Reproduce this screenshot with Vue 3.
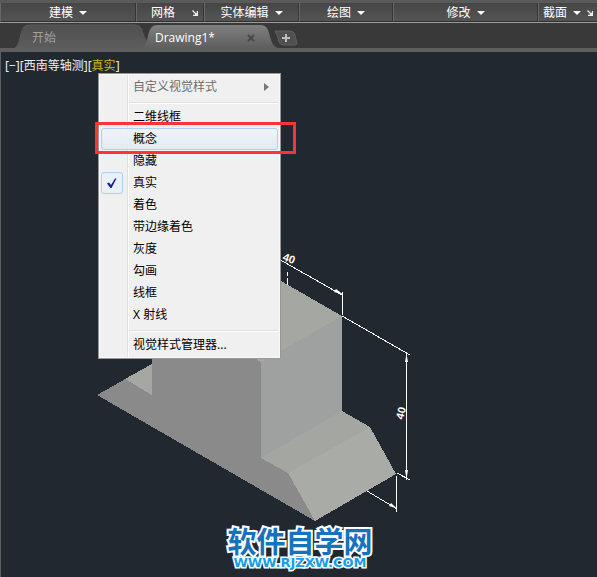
<script setup>
import { ref } from 'vue'

const panels = [
  { label: '建模', drop: true },
  { label: '网格', launcher: true },
  { label: '实体编辑', drop: true },
  { label: '绘图', drop: true },
  { label: '修改', drop: true },
  { label: '截面', drop: true, launcher: true }
]

const styles = ['二维线框', '概念', '隐藏', '真实', '着色', '带边缘着色', '灰度', '勾画', '线框', 'X 射线']
const current = ref('真实')
const hovered = ref('概念')
</script>

<template>
  <div class="app">
    <header class="ribbon">
      <div v-for="p in panels" :key="p.label" class="panel" :class="{ both: p.drop && p.launcher }">
        <button class="panel-title" type="button">
          {{ p.label }}
          <svg v-if="p.drop" width="8" height="4" viewBox="0 0 8 4"><path d="M0 0H8L4 4Z" fill="#fff" /></svg>
        </button>
        <button v-if="p.launcher" class="launcher" type="button" :aria-label="p.label">
          <svg width="6" height="6" viewBox="0 0 6 6">
            <path d="M0.5 0.5L4 4" stroke="#eee" stroke-width="1.3" />
            <path d="M5.4 1V5.4H1" fill="none" stroke="#eee" stroke-width="1.2" />
            <path d="M5.5 2V5.5H2Z" fill="#eee" />
          </svg>
        </button>
      </div>
    </header>

    <nav class="tabs">
      <button class="tab" type="button">
        <svg class="shape" viewBox="0 0 136 24" preserveAspectRatio="none">
          <defs>
            <linearGradient id="idle" x2="0" y2="1"><stop offset="0" stop-color="#505050" /><stop offset="1" stop-color="#5c5c5c" /></linearGradient>
          </defs>
          <path d="M0 24C6 22 5 9 9 4Q11 1 16 1H120Q126 1 128 6L136 24Z" fill="url(#idle)" />
          <path d="M9 4Q11 1 16 1H120Q126 1 128 6" fill="none" stroke="#5e5e5e" />
        </svg>
        <span>开始</span>
      </button>
      <button class="tab active" type="button">
        <svg class="shape" viewBox="0 0 136 24" preserveAspectRatio="none">
          <defs>
            <linearGradient id="live" x2="0" y2="1"><stop offset="0" stop-color="#808080" /><stop offset="1" stop-color="#5e5e5e" /></linearGradient>
          </defs>
          <path d="M0 24C6 22 5 9 9 4Q11 1 16 1H118Q124 1 126 6C129 14 129 22 136 24Z" fill="url(#live)" />
        </svg>
        <span>Drawing1*</span>
        <svg class="close" width="8" height="8" viewBox="0 0 8 8"><path d="M1 1L7 7M7 1L1 7" stroke="#464646" stroke-width="1.8" /></svg>
      </button>
      <button class="add" type="button" aria-label="+">
        <svg width="24" height="16" viewBox="0 0 24 16">
          <path d="M1 1H16Q20 1 21 5L23 14Q22 15 20 15H10Q6 15 5 12Q4 6 1 1Z" fill="#505050" stroke="#606060" />
          <path d="M12 4V12M8 8H16" stroke="#bcbcbc" stroke-width="2" />
        </svg>
      </button>
    </nav>

    <main class="canvas">
      <div class="viewlabel">[−][西南等轴测][<b>真实</b>]</div>

      <svg class="model" width="320" height="280" viewBox="96 246 320 280">
        <g shape-rendering="crispEdges">
          <path d="M97 395L152 364V316H261V458L288 473L315 521Z" fill="#8a8a8a" />
          <path d="M125 379L152 364V395Z" fill="#a5a7a3" />
          <path d="M281 281L342 316L261 362L180 316L261 269Z" fill="#a5a7a3" />
          <path d="M342 316V411L261 458V362Z" fill="#9ea19f" />
          <path d="M261 458L342 411L370 427L288 473Z" fill="#a4a6a2" />
          <path d="M370 427L396 474L315 521L288 473Z" fill="#a9aba7" />
        </g>
        <g fill="none" stroke="#fff" shape-rendering="crispEdges">
          <path d="M270 254L342 295M342.5 292V315M342 316L410 355M406.5 353V480M397 473L410 480M396.5 476V512M367 491L397 509M287.5 272V276M287.5 278V285" />
        </g>
        <g fill="#fff">
          <path d="M334 292L336 289L343 294.5Z" />
          <path d="M405 362L406.5 354L408 362Z" />
          <path d="M405 470L406.5 479L408 470Z" />
          <path d="M389 506L391 503L397 508.5Z" />
        </g>
        <text class="dim" x="282" y="260" transform="rotate(20 282 260)">40</text>
        <text class="dim" x="403" y="420" transform="rotate(-75 403 420)">40</text>
      </svg>

      <div class="menu" role="menu">
        <button class="item muted" type="button" role="menuitem">
          自定义视觉样式
          <svg class="arrow" width="5" height="8" viewBox="0 0 5 8"><path d="M0 0L5 4L0 8Z" fill="#777" /></svg>
        </button>
        <div class="rule"></div>
        <button
          v-for="s in styles"
          :key="s"
          class="item"
          :class="{ hot: s === hovered }"
          type="button"
          role="menuitemradio"
          :aria-checked="s === current"
          @mouseenter="hovered = s"
          @click="current = s"
        >
          <i v-if="s === current" class="check">
            <svg width="10" height="10" viewBox="0 0 10 10"><path d="M0 5.5L2 4.5L4 7L8 0.5H9.5L4.5 10H3.5Z" fill="#151c9c" /></svg>
          </i>
          {{ s }}
        </button>
        <div class="rule"></div>
        <button class="item" type="button" role="menuitem">视觉样式管理器...</button>
      </div>
      <div class="callout"></div>

      <div class="brand">
        <strong>软件自学网</strong>
        <span>WWW.RJZXW.COM</span>
      </div>
    </main>
  </div>
</template>

<style>
body {
  margin: 0;
  background: #212830;
}
</style>

<style scoped>
.app {
  min-height: 100vh;
  display: flex;
  flex-direction: column;
  font: 12px/16px "Noto Sans", "Noto Sans CJK SC", sans-serif;
}
button {
  border: 0;
  padding: 0;
  background: none;
  font: inherit;
  color: inherit;
}
.ribbon {
  display: grid;
  grid-template-columns: 136fr 68fr 95fr 94fr 145fr 59fr;
  height: 23px;
  box-sizing: border-box;
  padding-top: 3px;
  background: #5a5a5a;
  border-bottom: 1px solid #9a9a9a;
  color: #fff;
}
.panel {
  display: flex;
  align-items: center;
  justify-content: center;
  padding-top: 2px;
  background: linear-gradient(#464646, #545454);
  border-left: 1px solid #686868;
  border-right: 1px solid #353535;
  border-bottom: 1px solid #303030;
}
.panel-title {
  display: flex;
  align-items: center;
  gap: 6px;
  white-space: nowrap;
}
.panel:nth-child(2) {
  justify-content: space-between;
  padding: 2px 5px 0 14px;
}
.panel.both {
  justify-content: space-between;
  padding: 2px 4px 0 4px;
  border-right: 0;
}
.launcher {
  display: flex;
}
.tabs {
  display: flex;
  align-items: flex-end;
  height: 25px;
  padding-left: 14px;
  background: #393939;
  border-bottom: 4px solid #5e5e5e;
}
.tab {
  position: relative;
  display: flex;
  align-items: center;
  justify-content: space-between;
  width: 136px;
  height: 24px;
  padding: 4px 24px 0 18px;
  color: #a0a0a0;
}
.tab.active {
  margin-left: -8px;
  padding: 4px 23px 0 13px;
  color: #fff;
}
.shape {
  position: absolute;
  inset: 0;
  width: 100%;
  height: 100%;
}
.tab span,
.close {
  position: relative;
}
.tab.active span {
  font-family: "Open Sans", sans-serif;
  font-size: 12px;
}
.add {
  display: flex;
  margin: 0 0 2px -4px;
}
.canvas {
  position: relative;
  flex: 1;
  min-height: 525px;
  box-sizing: border-box;
  padding: 6px 4px;
  background: #212830;
  border-left: 1px solid #5e5e5e;
}
.viewlabel {
  color: #eee;
}
.viewlabel b {
  font-weight: 400;
  color: #cdb81b;
}
.model {
  position: absolute;
  left: 95px;
  top: 194px;
}
.dim {
  font: bold 11px "Liberation Sans", sans-serif;
  fill: #fff;
}
.menu {
  position: absolute;
  left: 97px;
  top: 21px;
  width: 183px;
  box-sizing: border-box;
  padding: 2px;
  border: 1px solid #979797;
  background: linear-gradient(90deg, transparent 28px, #e0e0e0 28px, #e0e0e0 29px, #fff 29px, #fff 30px, transparent 30px) #f0f0f0;
  box-shadow: inset 0 0 0 1px #f8f8f8;
  color: #000;
}
.item {
  position: relative;
  display: flex;
  align-items: center;
  width: 100%;
  height: 22px;
  padding: 0 8px 0 31px;
  border: 1px solid transparent;
  border-radius: 3px;
  text-align: left;
  white-space: nowrap;
}
.item.muted {
  justify-content: space-between;
  color: #6d6d6d;
}
.item.hot {
  border-color: #aecff7;
  background: linear-gradient(rgba(240, 244, 250, 0.9), rgba(225, 233, 243, 0.9));
}
.rule {
  height: 1px;
  margin: 4px 0 2px 28px;
  background: #e0e0e0;
  border-bottom: 1px solid #fff;
}
.check {
  position: absolute;
  left: -1px;
  top: -1px;
  display: flex;
  align-items: center;
  justify-content: center;
  width: 22px;
  height: 22px;
  box-sizing: border-box;
  border: 1px solid #aecff7;
  border-radius: 3px;
  background: #eaf0f8;
}
.callout {
  position: absolute;
  left: 94px;
  top: 70px;
  width: 201px;
  height: 32px;
  box-sizing: border-box;
  border: 3px solid #fd3434;
  pointer-events: none;
}
.brand {
  position: absolute;
  left: 2px;
  right: 0;
  bottom: 8px;
  display: flex;
  flex-direction: column;
  align-items: center;
  -webkit-text-stroke: 4px #fff;
  paint-order: stroke fill;
}
.brand strong {
  font: 700 29px/34px "Noto Sans CJK SC", sans-serif;
  color: #1672bd;
}
.brand span {
  font: bold 13px/12px "DejaVu Sans", sans-serif;
  color: #12a0ea;
  -webkit-text-stroke-width: 3px;
}
</style>
